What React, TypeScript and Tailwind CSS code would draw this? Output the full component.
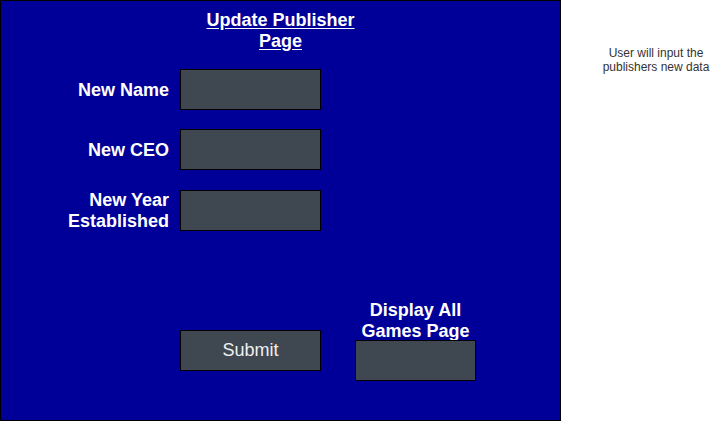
const box = 'h-[41px] border border-black bg-[#3f4850]'

function Field({ label }: { label: React.ReactNode }) {
  return (
    <div className="flex items-center">
      <div className="w-[168px] translate-y-[1px] text-right text-[18px] font-bold leading-[21px] text-white">{label}</div>
      <div className={`ml-[11px] w-[141px] ${box}`} />
    </div>
  )
}

export default function App() {
  return (
    <div className="flex h-[421px] w-[711px] bg-white font-['Liberation_Sans',Arial,sans-serif]">
      <div className="flex h-[421px] w-[561px] shrink-0 flex-col border border-black bg-[#000099]">
        <div className="pt-[9px] text-center text-[18px] font-bold leading-[21px] text-white underline underline-offset-2">
          Update Publisher
          <br />
          Page
        </div>

        <div className="mt-[17px] flex flex-col gap-[19px]">
          <Field label="New Name" />
          <Field label="New CEO" />
          <Field
            label={
              <>
                New Year
                <br />
                Established
              </>
            }
          />
        </div>

        <div className="mt-[67px] flex items-start">
          <div className={`ml-[179px] mt-[32px] flex w-[141px] items-center justify-center text-[18px] text-[#f0f0f0] ${box}`}>
            Submit
          </div>
          <div className="ml-[34px] flex w-[121px] flex-col items-center">
            <div className="-mb-[2px] mt-[2px] w-[140px] text-center text-[18px] font-bold leading-[21px] text-white">
              Display All
              <br />
              Games Page
            </div>
            <div className={`w-[121px] ${box}`} />
          </div>
        </div>
      </div>

      <div className="ml-[40px] mt-[46px] w-[110px] shrink-0 text-center text-[12px] leading-[14px] text-[#333333]">
        User will input the publishers new data
      </div>
    </div>
  )
}
